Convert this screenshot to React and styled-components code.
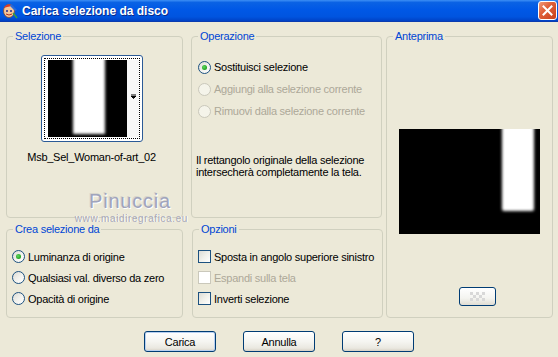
import styled, { createGlobalStyle } from "styled-components";

const GlobalStyle = createGlobalStyle`
  html, body {
    margin: 0;
    padding: 0;
    background: #ece9d8;
  }
  body {
    font-family: "Liberation Sans", Arial, sans-serif;
    font-size: 11px;
    letter-spacing: -0.25px;
    color: #000;
  }
`;

export default function App() {
  return (
    <Window>
      <GlobalStyle />
      <TitleBar>
        <TitleIcon />
        <TitleText>Carica selezione da disco</TitleText>
        <CloseButton>
          <svg width="11" height="11" viewBox="0 0 11 11">
            <path d="M1.5 1.5 L9.5 9.5 M9.5 1.5 L1.5 9.5" stroke="#fff" strokeWidth="2" strokeLinecap="square" />
          </svg>
        </CloseButton>
      </TitleBar>

      <Body>
        <Grid>
          <Group $col={1} $row={1} $width={177}>
            <Legend>Selezione</Legend>
            <SelectionContent>
              <ThumbBox>
                <ThumbInner>
                  <Thumbnail />
                  <DropArrow width="5" height="5" viewBox="0 0 5 5">
                    <path d="M0 0 H5 M0 2 H5 L2.5 4.5 Z" stroke="#000" strokeWidth="1" fill="#000" />
                  </DropArrow>
                </ThumbInner>
              </ThumbBox>
              <FileName>Msb_Sel_Woman-of-art_02</FileName>
            </SelectionContent>
          </Group>

          <Group $col={2} $row={1} $width={191}>
            <Legend>Operazione</Legend>
            <OptionList $top={13} $row={22}>
              <Option><Radio $checked /> Sostituisci selezione</Option>
              <Option $disabled><Radio $disabled /> Aggiungi alla selezione corrente</Option>
              <Option $disabled><Radio $disabled /> Rimuovi dalla selezione corrente</Option>
            </OptionList>
            <Note>
              Il rettangolo originale della selezione
              <br />
              intersecherà completamente la tela.
            </Note>
          </Group>

          <Group $col={3} $row="1 / span 2" $width={167}>
            <Legend>Anteprima</Legend>
            <PreviewContent>
              <Preview />
              <SmallButton>
                <Checker />
              </SmallButton>
            </PreviewContent>
          </Group>

          <Group $col={1} $row={2} $width={177}>
            <Legend>Crea selezione da</Legend>
            <OptionList $top={10} $row={21} $indent={5}>
              <Option><Radio $checked /> Luminanza di origine</Option>
              <Option><Radio /> Qualsiasi val. diverso da zero</Option>
              <Option><Radio /> Opacità di origine</Option>
            </OptionList>
          </Group>

          <Group $col={2} $row={2} $width={191} $shift={1}>
            <Legend>Opzioni</Legend>
            <OptionList $top={10} $row={21} $indent={5}>
              <Option><Check /> Sposta in angolo superiore sinistro</Option>
              <Option $disabled><Check $disabled /> Espandi sulla tela</Option>
              <Option><Check /> Inverti selezione</Option>
            </OptionList>
          </Group>
        </Grid>

        <ButtonRow>
          <Button $default>Carica</Button>
          <Button>Annulla</Button>
          <Button>?</Button>
        </ButtonRow>

        <Watermark>
          <WatermarkName>Pinuccia</WatermarkName>
          <WatermarkUrl>www.maidiregrafica.eu</WatermarkUrl>
        </Watermark>
      </Body>
    </Window>
  );
}

function TitleIcon() {
  return (
    <svg width="16" height="16" viewBox="0 0 16 16" style={{ flex: "none" }}>
      <ellipse cx="7" cy="8" rx="5.5" ry="6.5" fill="#f4c59a" stroke="#8a4a2a" strokeWidth="0.8" />
      <path d="M2 5 Q4 0 10 2 Q8 4 5 4 Z" fill="#d83a2a" />
      <path d="M9 1 L15 7 L13 8 L8 3 Z" fill="#2a6ad8" />
      <circle cx="5" cy="8" r="1" fill="#2a2a8a" />
      <circle cx="9" cy="8" r="1" fill="#2a2a8a" />
      <path d="M4 11 Q7 13 10 11" stroke="#b03020" strokeWidth="1" fill="none" />
      <path d="M11 10 L15 15" stroke="#3aa040" strokeWidth="1.5" />
    </svg>
  );
}

function Thumbnail() {
  return (
    <svg width="94" height="77" viewBox="0 0 94 77" style={{ display: "block" }}>
      <defs>
        <filter id="tblur" x="-20%" y="-20%" width="140%" height="140%">
          <feGaussianBlur stdDeviation="1.6" />
        </filter>
      </defs>
      <rect x="0" y="0" width="94" height="77" fill="#fff" />
      <rect x="3" y="0" width="79" height="77" fill="#000" />
      <rect x="28" y="-4" width="32" height="78" fill="#fff" filter="url(#tblur)" />
      <rect x="82" y="0" width="12" height="77" fill="#f7f7f7" />
    </svg>
  );
}

function Preview() {
  return (
    <svg width="141" height="105" viewBox="0 0 141 105" style={{ display: "block" }}>
      <defs>
        <filter id="pblur" x="-20%" y="-20%" width="140%" height="140%">
          <feGaussianBlur stdDeviation="1.8" />
        </filter>
        <clipPath id="pclip">
          <rect x="0" y="0" width="141" height="105" />
        </clipPath>
      </defs>
      <rect x="0" y="0" width="141" height="105" fill="#000" />
      <g clipPath="url(#pclip)">
        <rect x="103" y="-6" width="32" height="88" rx="2" fill="#fff" filter="url(#pblur)" />
      </g>
    </svg>
  );
}

function Checker() {
  const cells = [];
  for (let r = 0; r < 3; r++) {
    for (let c = 0; c < 5; c++) {
      if ((r + c) % 2 === 0) cells.push(<rect key={`${r}-${c}`} x={c * 3} y={r * 3} width="3" height="3" fill="#d8d8d8" />);
    }
  }
  return (
    <svg width="15" height="9" viewBox="0 0 15 9">
      {cells}
    </svg>
  );
}

const Window = styled.div`
  position: relative;
  width: 558px;
  height: 357px;
  overflow: hidden;
  background: #ece9d8;
`;

const TitleBar = styled.div`
  height: 22px;
  display: flex;
  align-items: center;
  gap: 4px;
  padding: 0 1px 0 2px;
  box-sizing: border-box;
  background: linear-gradient(
    to bottom,
    #3d8ff5 0%,
    #0a62e4 12%,
    #0058e6 45%,
    #0054df 80%,
    #0041c4 100%
  );
  border-bottom: 1px solid #0a3bb0;
`;

const TitleText = styled.span`
  flex: 1;
  font-family: "Liberation Sans", Arial, sans-serif;
  font-weight: bold;
  font-size: 12px;
  color: #fff;
  text-shadow: 1px 1px 0 #0a2a8a;
  letter-spacing: 0;
  padding-top: 1px;
`;

const CloseButton = styled.div`
  width: 19px;
  height: 19px;
  box-sizing: border-box;
  border: 1px solid #fff;
  border-radius: 3px;
  background: linear-gradient(135deg, #ef9a7a 0%, #e0603a 40%, #c8401c 100%);
  display: flex;
  align-items: center;
  justify-content: center;
`;

const Body = styled.div`
  position: relative;
  padding: 8px 0 0 6px;
`;

const Grid = styled.div`
  display: grid;
  grid-template-columns: 185px 195px 167px;
  grid-template-rows: 188px 95px;
  row-gap: 5px;
`;

const Group = styled.fieldset`
  grid-column: ${(p) => p.$col};
  grid-row: ${(p) => p.$row};
  width: ${(p) => p.$width}px;
  margin: 0 0 0 ${(p) => p.$shift || 0}px;
  padding: 0;
  min-width: 0;
  box-sizing: border-box;
  border: 1px solid #d0d0bf;
  border-radius: 4px;
`;

const Legend = styled.legend`
  margin-left: 6px;
  padding: 0 2px;
  font-size: 11px;
  line-height: 13px;
  color: #0046d5;
`;

const SelectionContent = styled.div`
  display: flex;
  flex-direction: column;
  align-items: center;
  padding: 12px 6px 0 0;
`;

const ThumbBox = styled.div`
  width: 102px;
  height: 87px;
  box-sizing: border-box;
  border: 1px solid #2b5a96;
  border-radius: 3px;
  background: #fff;
  padding: 2px;
`;

const ThumbInner = styled.div`
  position: relative;
  height: 100%;
  box-sizing: border-box;
  border: 1px dotted #000;
  padding: 1px 0 0 0;
  overflow: hidden;
`;

const DropArrow = styled.svg`
  position: absolute;
  right: 3px;
  top: 35px;
`;

const FileName = styled.div`
  margin-top: 9px;
  line-height: 13px;
`;

const OptionList = styled.div`
  display: flex;
  flex-direction: column;
  padding: ${(p) => p.$top}px 0 0 ${(p) => p.$indent || 6}px;
  & > * {
    height: ${(p) => p.$row}px;
  }
`;

const Option = styled.label`
  display: flex;
  align-items: center;
  gap: 3px;
  white-space: nowrap;
  color: ${(p) => (p.$disabled ? "#aca899" : "#000")};
`;

const Radio = styled.span`
  flex: none;
  width: 13px;
  height: 13px;
  box-sizing: border-box;
  border-radius: 50%;
  border: 1px solid ${(p) => (p.$disabled ? "#cac8bb" : "#1c5180")};
  background: ${(p) =>
    p.$disabled
      ? "#f5f4ea"
      : "linear-gradient(135deg, #dcdbd4 0%, #f3f3ef 55%, #ffffff 100%)"};
  display: flex;
  align-items: center;
  justify-content: center;
  &::after {
    content: "";
    display: ${(p) => (p.$checked ? "block" : "none")};
    width: 5px;
    height: 5px;
    border-radius: 50%;
    background: radial-gradient(circle at 40% 40%, #5fd85f 0%, #21a121 70%, #1a801a 100%);
  }
`;

const Check = styled.span`
  flex: none;
  width: 13px;
  height: 13px;
  box-sizing: border-box;
  border: 1px solid ${(p) => (p.$disabled ? "#cac8bb" : "#1c5180")};
  background: ${(p) =>
    p.$disabled
      ? "#fff"
      : "linear-gradient(135deg, #dcdcd6 0%, #f0f0ea 50%, #ffffff 100%)"};
`;

const Note = styled.div`
  margin: 32px 0 0 4px;
  line-height: 12px;
`;

const PreviewContent = styled.div`
  display: flex;
  flex-direction: column;
  align-items: center;
  padding-top: 86px;
`;

const SmallButton = styled.div`
  margin: 53px 0 0 16px;
  width: 37px;
  height: 19px;
  box-sizing: border-box;
  border: 1px solid #003c74;
  border-radius: 3px;
  background: linear-gradient(to bottom, #ffffff 0%, #f4f4f0 60%, #e0ddd3 100%);
  display: flex;
  align-items: center;
  justify-content: center;
`;

const ButtonRow = styled.div`
  display: flex;
  justify-content: center;
  gap: 27px;
  margin: 13px 0 0 -6px;
`;

const Button = styled.div`
  width: 72px;
  height: 21px;
  box-sizing: border-box;
  border: 1px solid #003c74;
  border-radius: 3px;
  background: linear-gradient(to bottom, #ffffff 0%, #f5f5f1 50%, #eae8e0 85%, #d6d0c5 100%);
  box-shadow: ${(p) => (p.$default ? "inset 0 0 0 1px #b8d0f0" : "none")};
  display: flex;
  align-items: center;
  justify-content: center;
  font-size: 11px;
`;

const Watermark = styled.div`
  position: absolute;
  left: 66px;
  top: 169px;
  width: 122px;
  display: flex;
  flex-direction: column;
  align-items: flex-end;
  pointer-events: none;
`;

const WatermarkName = styled.div`
  font-family: "Liberation Sans", Arial, sans-serif;
  font-size: 20px;
  line-height: 20px;
  color: #a0a4bc;
  letter-spacing: 0.8px;
  margin-right: 17px;
  text-shadow: 1px 1px 0 #ffffff, -1px -1px 0 #d8d6cc;
`;

const WatermarkUrl = styled.div`
  font-family: "Liberation Sans", Arial, sans-serif;
  font-size: 10px;
  line-height: 10px;
  color: #a8a8b4;
  letter-spacing: 0.6px;
  margin-top: 3px;
  text-shadow: 1px 0 0 #ffffff;
`;
